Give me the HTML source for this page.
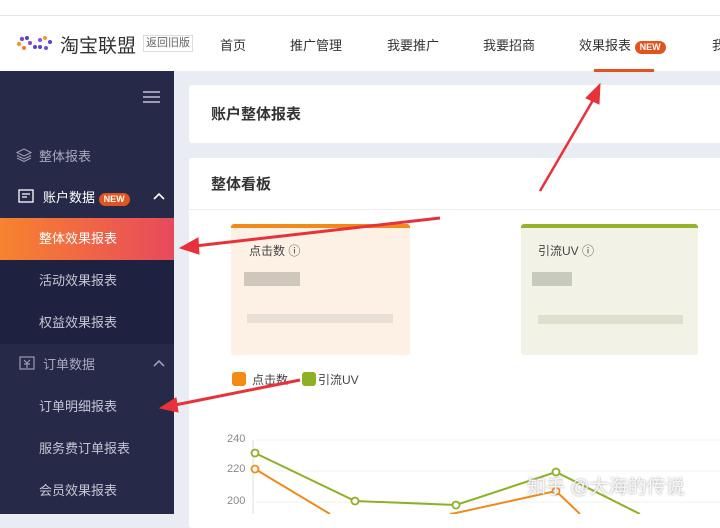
<!DOCTYPE html>
<html><head><meta charset="utf-8"><style>
*{margin:0;padding:0;box-sizing:border-box}
body{width:720px;height:514px;overflow:hidden;background:#e9ecf3;font-family:"Liberation Sans","Noto Sans CJK SC",sans-serif;position:relative}
.top{position:absolute;left:0;top:0;width:720px;height:71px;background:#fff}
.top .line{position:absolute;left:0;top:15px;width:720px;height:1px;background:#e6e6e6}
.abs{position:absolute;white-space:nowrap}
.nav{font-size:13px;color:#333;top:35px}
.badge{display:inline-block;background:#e2541f;color:#fff;font-size:9px;font-weight:bold;border-radius:8px;padding:1px 5px;line-height:11px}
.side{position:absolute;left:0;top:71px;width:174px;height:443px;background:#272948}
.sub{position:absolute;left:0;width:174px;background:#1f2140}
.si{position:absolute;left:39px;font-size:13px;color:#c5c6d3}
.card{position:absolute;background:#fff;border-radius:3px}
</style></head><body>
<div class="top"><div class="line"></div>
<svg class="abs" style="left:16px;top:35px" width="38" height="16" viewBox="0 0 38 16">
<circle cx="3" cy="9" r="2.2" fill="#f39a2b"/><circle cx="6" cy="4" r="2.2" fill="#7a4ad8"/><circle cx="11" cy="3" r="2" fill="#5a3fd0"/><circle cx="8" cy="13" r="2" fill="#f07a2a"/><circle cx="14" cy="8" r="2" fill="#7a4ad8"/><circle cx="19" cy="12" r="2" fill="#5a3fd0"/><circle cx="24" cy="5" r="2" fill="#9a4ad8"/><circle cx="29" cy="3" r="2" fill="#f39a2b"/><circle cx="34" cy="7" r="2" fill="#5a3fd0"/><circle cx="30" cy="13" r="2" fill="#7a4ad8"/><circle cx="24" cy="12" r="2" fill="#5a3fd0"/></svg>
<div class="abs" style="left:60px;top:31px;font-size:19px;color:#333">淘宝联盟</div>
<div class="abs" style="left:143px;top:35px;font-size:11px;color:#666;border:1px solid #ddd;padding:0 2px;line-height:15px">返回旧版</div>
<div class="abs nav" style="left:220px">首页</div>
<div class="abs nav" style="left:290px">推广管理</div>
<div class="abs nav" style="left:387px">我要推广</div>
<div class="abs nav" style="left:483px">我要招商</div>
<div class="abs nav" style="left:579px">效果报表 <span class="badge">NEW</span></div>
<div class="abs nav" style="left:712px">我</div>
<div class="abs" style="left:594px;top:69px;width:60px;height:3px;background:#e2541f"></div>
</div>
<div class="side">
<div class="abs" style="left:143px;top:20px;width:17px;height:12px;border-top:2px solid #9a9cb0;border-bottom:2px solid #9a9cb0"><div style="margin-top:3px;height:2px;background:#9a9cb0"></div></div>
<svg class="abs" style="left:16px;top:77px" width="16" height="14" viewBox="0 0 16 14" fill="none" stroke="#9a9cb0" stroke-width="1.2"><path d="M8 1L15 4.5 8 8 1 4.5Z"/><path d="M1 7.5L8 11 15 7.5"/><path d="M1 10L8 13.5 15 10"/></svg>
<div class="abs" style="left:39px;top:75px;font-size:13px;color:#a8aabb">整体报表</div>
<svg class="abs" style="left:18px;top:118px" width="16" height="14" viewBox="0 0 16 14" fill="none" stroke="#fff" stroke-width="1.3"><rect x="1" y="1" width="14" height="12"/><path d="M4 5h8M4 8h5"/></svg>
<div class="abs" style="left:43px;top:116px;font-size:13px;color:#fff">账户数据 <span class="badge">NEW</span></div>
<svg class="abs" style="left:153px;top:121px" width="12" height="8" viewBox="0 0 12 8" fill="none" stroke="#fff" stroke-width="1.6"><path d="M1 7L6 2 11 7"/></svg>
<div class="abs" style="left:0;top:147px;width:174px;height:42px;background:linear-gradient(90deg,#f7832f,#e8495c)"></div>
<div class="abs" style="left:39px;top:157px;font-size:13px;color:#fff">整体效果报表</div>
<div class="sub" style="top:189px;height:84px"></div>
<div class="si" style="top:199px">活动效果报表</div>
<div class="si" style="top:241px">权益效果报表</div>
<svg class="abs" style="left:19px;top:285px" width="16" height="14" viewBox="0 0 16 14" fill="none" stroke="#9a9cb0" stroke-width="1.2"><rect x="1" y="1" width="14" height="12"/><path d="M5 4l3 3 3-3M8 7v5M5 8h6"/></svg>
<div class="abs" style="left:43px;top:283px;font-size:13px;color:#a8aabb">订单数据</div>
<svg class="abs" style="left:153px;top:288px" width="12" height="8" viewBox="0 0 12 8" fill="none" stroke="#9a9cb0" stroke-width="1.6"><path d="M1 7L6 2 11 7"/></svg>
<div class="si" style="top:325px">订单明细报表</div>
<div class="si" style="top:367px">服务费订单报表</div>
<div class="si" style="top:409px">会员效果报表</div>
</div>
<div class="card" style="left:189px;top:85px;width:540px;height:58px"></div>
<div class="abs" style="left:211px;top:103px;font-size:15px;color:#333;font-weight:bold">账户整体报表</div>
<div class="card" style="left:189px;top:158px;width:540px;height:370px"></div>
<div class="abs" style="left:211px;top:173px;font-size:15px;color:#333;font-weight:bold">整体看板</div>
<div class="abs" style="left:189px;top:209px;width:540px;height:1px;background:#eee"></div>
<div class="abs" style="left:231px;top:224px;width:179px;height:131px;background:#fdf0e4;border-top:4px solid #f08a1a;border-radius:3px"></div>
<div class="abs" style="left:249px;top:242px;font-size:12px;color:#444">点击数 ⓘ</div>
<div class="abs" style="left:244px;top:272px;width:56px;height:14px;background:#bbb3ab;opacity:.7"></div>
<div class="abs" style="left:247px;top:314px;width:146px;height:9px;background:#e8e0d6"></div>
<div class="abs" style="left:521px;top:224px;width:177px;height:131px;background:#f2f3e6;border-top:4px solid #94b22b;border-radius:3px"></div>
<div class="abs" style="left:538px;top:242px;font-size:12px;color:#444">引流UV ⓘ</div>
<div class="abs" style="left:532px;top:272px;width:40px;height:14px;background:#b8b8ae;opacity:.7"></div>
<div class="abs" style="left:538px;top:315px;width:145px;height:9px;background:#dedfce"></div>
<div class="abs" style="left:232px;top:372px;width:14px;height:14px;background:#f28c14;border-radius:3px"></div>
<div class="abs" style="left:252px;top:371px;font-size:12px;color:#444">点击数</div>
<div class="abs" style="left:302px;top:372px;width:14px;height:14px;background:#8db024;border-radius:3px"></div>
<div class="abs" style="left:318px;top:371px;font-size:12px;color:#444">引流UV</div>
<div class="abs" style="left:227px;top:433px;font-size:11px;color:#888">240</div>
<div class="abs" style="left:227px;top:463px;font-size:11px;color:#888">220</div>
<div class="abs" style="left:227px;top:495px;font-size:11px;color:#888">200</div>
<svg class="abs" style="left:0;top:0" width="720" height="514" viewBox="0 0 720 514">
<path d="M255 440H720M255 471H720M255 502H720" stroke="#f0f0f0"/>
<path d="M253 440V514" stroke="#ddd"/>
<path d="M255 469L330 514M450 514L456 513L556 491L580 514" fill="none" stroke="#f08a1a" stroke-width="2"/>
<path d="M255 453L355 501L456 505L556 472L640 514" fill="none" stroke="#8db024" stroke-width="2"/>
<g fill="#fff" stroke-width="1.8"><circle cx="255" cy="453" r="3.5" stroke="#8db024"/><circle cx="355" cy="501" r="3.5" stroke="#8db024"/><circle cx="456" cy="505" r="3.5" stroke="#8db024"/><circle cx="556" cy="472" r="3.5" stroke="#8db024"/><circle cx="255" cy="469" r="3.5" stroke="#f08a1a"/><circle cx="556" cy="491" r="3.5" stroke="#f08a1a"/></g>
<g fill="#e8313a" stroke="#e8313a">
<path d="M540 191L596 95" stroke-width="2.5"/><path d="M600 84L586 98L599 104Z"/>
<path d="M440 218L195 246" stroke-width="3"/><path d="M180 248L198 238L199 254Z"/>
<path d="M300 380L175 405" stroke-width="3"/><path d="M160 408L176 398L178 412Z"/>
</g>
</svg>
<div class="abs" style="left:527px;top:472px;font-size:19px;color:rgba(255,255,255,.85);text-shadow:0 0 2px #999">知乎 @大海的传说</div>
</body></html>
